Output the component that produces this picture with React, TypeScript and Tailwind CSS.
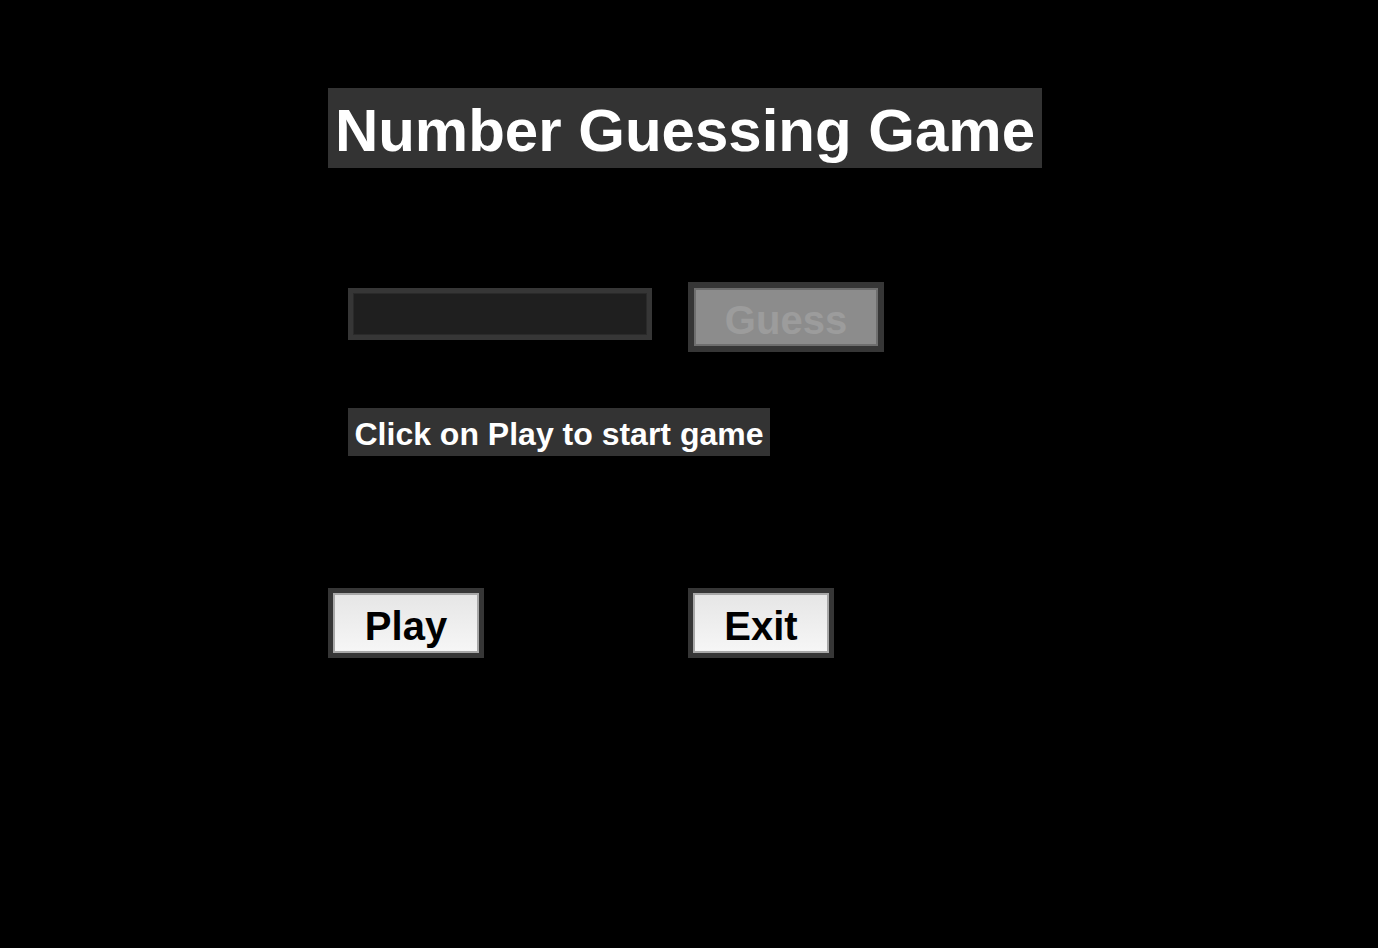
import type { FC } from 'react'

const App: FC = () => {
  return (
    <div className="min-h-[948px] w-full bg-black pl-[328px] pt-[88px] font-['Liberation_Sans',Arial,sans-serif] font-bold">
      <div className="flex h-[80px] w-[714px] items-center justify-center bg-[#333333] pt-[6px] text-[60px] leading-none text-white">
        Number Guessing Game
      </div>

      <div className="mt-[114px] flex items-start">
        <div className="ml-[20px] mt-[6px] h-[52px] w-[304px] border-[5px] border-[#363636] bg-[#1f1f1f]">
          <div className="h-full w-full border border-[#2a2a2a]" />
        </div>
        <div className="ml-[36px] h-[70px] w-[196px] border-[6px] border-[#363636]">
          <div className="flex h-full w-full items-center justify-center border-2 border-[#6e6e6e] bg-[#8c8c8c] pt-[6px] text-[40px] leading-none text-[#9c9c9c]">
            Guess
          </div>
        </div>
      </div>

      <div className="ml-[20px] mt-[56px] flex h-[48px] w-[422px] items-center justify-center bg-[#333333] pt-[4px] text-[32px] leading-none text-white">
        Click on Play to start game
      </div>

      <div className="mt-[132px] flex items-start">
        <div className="h-[70px] w-[156px] border-[5px] border-[#363636]">
          <div className="flex h-full w-full items-center justify-center border-2 border-[#a8a8a8] bg-gradient-to-b from-[#e6e6e6] to-[#f6f6f6] pt-[5px] text-[40px] leading-none text-black">
            Play
          </div>
        </div>
        <div className="ml-[204px] h-[70px] w-[146px] border-[5px] border-[#363636]">
          <div className="flex h-full w-full items-center justify-center border-2 border-[#a8a8a8] bg-gradient-to-b from-[#e6e6e6] to-[#f6f6f6] pt-[5px] text-[40px] leading-none text-black">
            Exit
          </div>
        </div>
      </div>
    </div>
  )
}

export default App
